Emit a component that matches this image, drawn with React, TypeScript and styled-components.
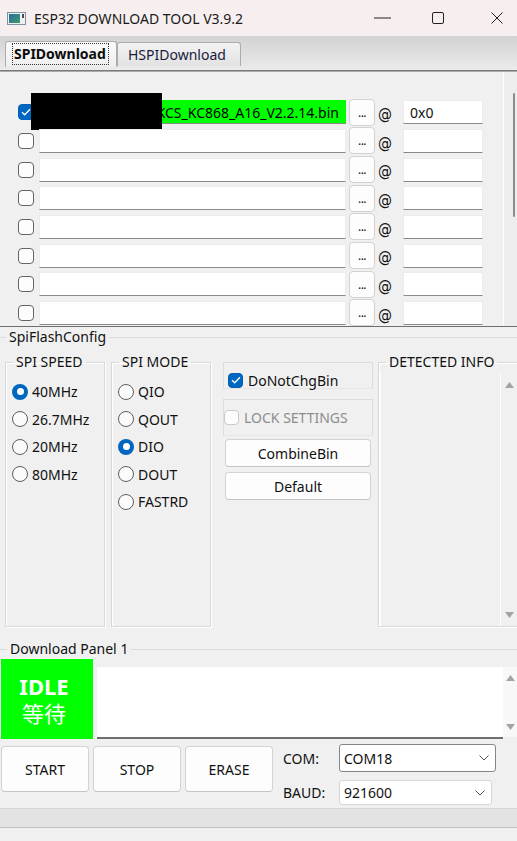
import React from "react";
import styled, { createGlobalStyle } from "styled-components";

const Global = createGlobalStyle`
  html, body { margin: 0; padding: 0; background: #f0f0f0; }
  body {
    font-family: "Noto Sans", "Liberation Sans", sans-serif;
    font-size: 14px;
    color: #111;
  }
  * { box-sizing: border-box; }
`;

const Window = styled.div`
  width: 517px;
  height: 841px;
  overflow: hidden;
  background: #f0f0f0;
  display: flex;
  flex-direction: column;
`;

/* ---------- title bar ---------- */
const TitleBar = styled.div`
  height: 36px;
  flex: none;
  display: flex;
  align-items: center;
  background: #f7efef;
  padding-left: 7px;
`;
const Title = styled.span`
  margin-left: 8px;
  font-size: 14px;
  color: #1a1a1a;
`;
const WinControls = styled.div`
  margin-left: auto;
  display: flex;
  align-items: center;
  padding-right: 14px;
`;
const WinGlyph = styled.span<{ $ml: number }>`
  margin-left: ${(p) => p.$ml}px;
  display: flex;
`;

/* ---------- tabs ---------- */
const TabStrip = styled.div`
  height: 36px;
  flex: none;
  display: flex;
  align-items: flex-start;
  padding: 5px 0 0 5px;
  background: linear-gradient(#d2d2d2, #ececec);
  border-bottom: 1px solid #aaaaaa;
  box-shadow: inset 0 -1px 0 #7a7a7a;
`;
const Tab = styled.div<{ $active?: boolean; $w: number }>`
  width: ${(p) => p.$w}px;
  height: ${(p) => (p.$active ? 26 : 24)}px;
  margin-top: ${(p) => (p.$active ? 0 : 1)}px;
  border: 1px solid #acacac;
  border-bottom: none;
  border-radius: 3px 3px 0 0;
  background: ${(p) =>
    p.$active ? "linear-gradient(#fbfbfb, #eeeeee)" : "linear-gradient(#f3f3f3, #e2e2e2)"};
  font-weight: ${(p) => (p.$active ? 700 : 400)};
  color: ${(p) => (p.$active ? "#0c0c0c" : "#1b1b3c")};
  display: flex;
  align-items: center;
  padding-left: ${(p) => (p.$active ? 6 : 10)}px;
  padding-bottom: 1px;
  font-size: 14px;
  white-space: nowrap;
`;
const FocusRing = styled.span`
  border: 1px dotted #333;
  height: 22px;
  display: flex;
  align-items: center;
  padding: 0 2px 1px 1px;
`;

/* ---------- file list ---------- */
const FilePanel = styled.div`
  height: 254px;
  flex: none;
  display: flex;
`;
const RowsArea = styled.div`
  flex: 1;
  padding: 26px 0 0 18px;
  overflow: hidden;
`;
const FileRow = styled.div`
  height: 28.67px;
  display: flex;
  align-items: center;
  position: relative;
`;
const CheckBox = styled.span<{ $checked?: boolean; $disabled?: boolean; $size?: number }>`
  width: ${(p) => p.$size ?? 16}px;
  height: ${(p) => p.$size ?? 16}px;
  flex: none;
  border-radius: 4px;
  border: ${(p) =>
    p.$checked ? "1px solid #005fb8" : p.$disabled ? "1.5px solid #cacaca" : "1.5px solid #646464"};
  background: ${(p) => (p.$checked ? "#0067c0" : "#fdfdfd")};
  display: flex;
  align-items: center;
  justify-content: center;
`;
const PathInput = styled.div<{ $filled?: boolean }>`
  width: 307px;
  height: 24px;
  margin-left: 5px;
  background: ${(p) => (p.$filled ? "#00ff00" : "#ffffff")};
  border: 1px solid ${(p) => (p.$filled ? "#00ff00" : "#ececec")};
  border-bottom: 1px solid #8a8a8a;
  display: flex;
  align-items: center;
  justify-content: flex-end;
  padding-right: 6px;
  font-size: 14px;
  color: #000;
  white-space: nowrap;
  overflow: hidden;
`;
const BrowseButton = styled.div`
  width: 26px;
  height: 27px;
  margin-left: 3px;
  background: #fdfdfd;
  border: 1px solid #d2d2d2;
  border-radius: 4px;
  display: flex;
  align-items: flex-end;
  justify-content: center;
  font-size: 12px;
  line-height: 1;
  padding-bottom: 6px;
  letter-spacing: -0.5px;
`;
const AtSign = styled.span`
  width: 14px;
  margin-left: 3px;
  font-size: 15.5px;
  line-height: 1;
  padding-top: 5px;
  font-family: "DejaVu Sans", "Noto Sans", sans-serif;
  transform: scaleX(0.9);
  transform-origin: left center;
`;
const AddrInput = styled.div`
  width: 80px;
  height: 24px;
  margin-left: 11px;
  background: #fff;
  border: 1px solid #ececec;
  border-bottom: 1px solid #8a8a8a;
  display: flex;
  align-items: center;
  padding-left: 6px;
  font-size: 14px;
`;
const Redaction = styled.div`
  position: absolute;
  left: 13px;
  top: -5px;
  width: 131px;
  height: 37px;
  background: #000;
`;
const ListScroll = styled.div`
  width: 14px;
  flex: none;
  border-left: 1px solid #ffffff;
  background: #eeeeee;
  padding: 21px 0 0 9px;
`;
const Thumb = styled.div`
  width: 2px;
  height: 124px;
  background: #8c8c8c;
  border-radius: 1px;
`;
const Splitter = styled.div`
  height: 1px;
  flex: none;
  background: #6e6e6e;
`;

/* ---------- group boxes ---------- */
const Section = styled.fieldset<{ $mt: number; $lm: number }>`
  margin: ${(p) => p.$mt}px 0 0 0;
  padding: 0;
  min-width: 0;
  flex: none;
  border: none;
  border-top: 1px solid #dcdcdc;
  & > legend {
    margin-left: ${(p) => p.$lm}px;
  }
`;
const Legend = styled.legend<{ $lh?: number }>`
  padding: 0 3px;
  line-height: ${(p) => p.$lh ?? 18}px;
  font-size: 14px;
  color: #111;
`;
const ConfigRow = styled.div`
  margin-top: 8px;
  height: 273px;
  display: flex;
`;
const GroupBox = styled.fieldset<{ $w?: number; $ml: number; $open?: boolean }>`
  margin: 0 0 0 ${(p) => p.$ml}px;
  padding: 0;
  min-width: 0;
  ${(p) => (p.$w ? `width: ${p.$w}px; flex: none;` : "flex: 1;")}
  border: 1px solid #d8d8d8;
  ${(p) => (p.$open ? "border-right: none;" : "")}
  box-shadow: 1px 1px 0 #ffffff, inset 1px 1px 0 #ffffff;
  display: flex;
  flex-direction: column;
  & > legend {
    margin-left: 7px;
  }
`;
const RadioList = styled.div`
  padding: 8px 0 0 6px;
  display: flex;
  flex-direction: column;
`;
const Option = styled.label`
  height: 27.5px;
  display: flex;
  align-items: center;
  font-size: 14px;
  color: #111;
`;
const Radio = styled.span<{ $checked?: boolean }>`
  width: 16px;
  height: 16px;
  flex: none;
  border-radius: 50%;
  margin-right: 4px;
  border: ${(p) => (p.$checked ? "none" : "1.5px solid #5e5e5e")};
  background: ${(p) => (p.$checked ? "#0067c0" : "#fbfbfb")};
  display: flex;
  align-items: center;
  justify-content: center;
  &::after {
    content: "";
    display: ${(p) => (p.$checked ? "block" : "none")};
    width: 7px;
    height: 7px;
    border-radius: 50%;
    background: #fff;
  }
`;
const MiddleCol = styled.div`
  width: 167px;
  flex: none;
  padding: 8px 0 0 12px;
  display: flex;
  flex-direction: column;
`;
const OptionBox = styled.div<{ $h: number; $mt: number; $pl: number; $pt: number }>`
  width: 150px;
  height: ${(p) => p.$h}px;
  margin-top: ${(p) => p.$mt}px;
  border: 1px solid #dcdcdc;
  border-bottom-color: #e6e6e6;
  display: flex;
  align-items: center;
  padding: ${(p) => p.$pt}px 0 0 ${(p) => p.$pl}px;
`;
const OptionText = styled.span<{ $disabled?: boolean }>`
  margin-left: 5px;
  font-size: 14px;
  color: ${(p) => (p.$disabled ? "#8d8d8d" : "#111")};
`;
const PushButton = styled.div<{ $w: number; $h: number; $mt: number; $ml?: number }>`
  width: ${(p) => p.$w}px;
  height: ${(p) => p.$h}px;
  margin-top: ${(p) => p.$mt}px;
  margin-left: ${(p) => p.$ml ?? 0}px;
  flex: none;
  background: #fdfdfd;
  border: 1px solid #d3d3d3;
  border-bottom-color: #c4c4c4;
  border-radius: 4px;
  display: flex;
  align-items: center;
  justify-content: center;
  font-size: 14px;
  color: #111;
`;
const InfoBody = styled.div`
  flex: 1;
  display: flex;
  padding: 3px 0 0 1px;
`;
const InfoArea = styled.div`
  width: 121px;
  flex: none;
  border-left: 1px solid #fff;
  border-right: 1px solid #fff;
  background: #f0f0f0;
`;
const ArrowCol = styled.div<{ $bg: string; $pt: number; $pb: number }>`
  flex: 1;
  background: ${(p) => p.$bg};
  display: flex;
  flex-direction: column;
  justify-content: space-between;
  align-items: center;
  padding: ${(p) => p.$pt}px 0 ${(p) => p.$pb}px 0;
`;

/* ---------- download panel ---------- */
const DownloadBody = styled.div`
  display: flex;
  align-items: flex-start;
  margin-top: 1px;
`;
const StatusBox = styled.div`
  width: 92px;
  height: 80px;
  margin-left: 1px;
  flex: none;
  background: #00ff00;
  color: #fff;
  display: flex;
  flex-direction: column;
  align-items: center;
  justify-content: center;
  padding-right: 6px;
  font-size: 22px;
`;
const IdleText = styled.span`
  display: block;
  height: 26px;
  line-height: 26px;
  font-weight: 700;
  font-family: "Noto Sans", sans-serif;
`;
const CjkText = styled.span`
  display: block;
  height: 26px;
  line-height: 26px;
  font-family: "Noto Sans CJK SC", "Noto Sans", sans-serif;
  font-weight: 400;
`;
const LogBox = styled.div`
  flex: 1;
  height: 72px;
  margin: 8px 0 0 4px;
  display: flex;
`;
const LogText = styled.div`
  flex: 1;
  background: #fff;
  border-bottom: 2px solid #6f6f6f;
`;
const LogScroll = styled.div`
  width: 14px;
  flex: none;
  height: 70px;
  background: #f8f8f8;
  display: flex;
  flex-direction: column;
  justify-content: space-between;
  align-items: center;
  padding: 8px 0 7px 0;
`;

/* ---------- controls ---------- */
const ControlsRow = styled.div`
  margin-top: 5px;
  height: 62px;
  flex: none;
  display: flex;
  align-items: flex-start;
`;
const PortGrid = styled.div`
  margin-left: 10px;
  display: grid;
  grid-template-columns: 56px auto;
  grid-template-rows: 28px 25px;
  row-gap: 8px;
  align-items: center;
`;
const PortLabel = styled.span`
  font-size: 14px;
  color: #111;
`;
const Select = styled.div<{ $w: number; $focus?: boolean }>`
  width: ${(p) => p.$w}px;
  height: 100%;
  background: #fff;
  border: 1px solid ${(p) => (p.$focus ? "#858585" : "#d6d6d6")};
  border-radius: 3px;
  display: flex;
  align-items: center;
  justify-content: space-between;
  padding: 0 6px 0 4px;
  font-size: 14px;
  color: #111;
`;
const StatusBar = styled.div`
  margin-top: 2px;
  height: 20px;
  flex: none;
  background: #e3e3e3;
  border-top: 1px solid #d6d6d6;
  border-bottom: 1px solid #c4c4c4;
`;

const Check = () => (
  <svg width="10" height="8" viewBox="0 0 10 8">
    <path d="M1 4.2 L3.7 6.8 L9 1.2" fill="none" stroke="#fff" strokeWidth="1.3" />
  </svg>
);
const UpArrow = () => (
  <svg width="9" height="6" viewBox="0 0 9 6">
    <polygon points="0,6 4.5,0 9,6" fill="#a3a3a3" />
  </svg>
);
const DownArrow = () => (
  <svg width="9" height="6" viewBox="0 0 9 6">
    <polygon points="0,0 4.5,6 9,0" fill="#a3a3a3" />
  </svg>
);
const Chevron = () => (
  <svg width="10" height="6" viewBox="0 0 10 6">
    <path d="M0.5 0.5 L5 5 L9.5 0.5" fill="none" stroke="#555" strokeWidth="1" />
  </svg>
);

const AppIcon = () => (
  <svg width="19" height="13" viewBox="0 0 19 13">
    <defs>
      <linearGradient id="appg" x1="0" y1="0" x2="1" y2="1">
        <stop offset="0" stopColor="#2c6aa0" />
        <stop offset="1" stopColor="#3c9e6c" />
      </linearGradient>
    </defs>
    <rect x="0.5" y="0.5" width="18" height="12" fill="#eef1f4" stroke="#8390a0" />
    <rect x="2" y="2" width="11" height="9" fill="url(#appg)" />
    <rect x="15" y="2" width="2" height="4" fill="#4a4a4a" />
  </svg>
);

const App: React.FC = () => {
  const rows = Array.from({ length: 8 }, (_, i) => i);
  return (
    <Window>
      <Global />
      <TitleBar>
        <AppIcon />
        <Title>ESP32 DOWNLOAD TOOL V3.9.2</Title>
        <WinControls>
          <WinGlyph $ml={0}>
            <svg width="17" height="2" viewBox="0 0 17 2">
              <rect x="0" y="0.5" width="17" height="1" fill="#222" />
            </svg>
          </WinGlyph>
          <WinGlyph $ml={41}>
            <svg width="12" height="12" viewBox="0 0 12 12">
              <rect x="0.5" y="0.5" width="11" height="11" rx="1.5" fill="none" stroke="#222" />
            </svg>
          </WinGlyph>
          <WinGlyph $ml={47}>
            <svg width="12" height="12" viewBox="0 0 12 12">
              <path d="M0.5 0.5 L11.5 11.5 M11.5 0.5 L0.5 11.5" stroke="#222" strokeWidth="1" />
            </svg>
          </WinGlyph>
        </WinControls>
      </TitleBar>

      <TabStrip>
        <Tab $active $w={112}>
          <FocusRing>SPIDownload</FocusRing>
        </Tab>
        <Tab $w={124}>HSPIDownload</Tab>
      </TabStrip>

      <FilePanel>
        <RowsArea>
          {rows.map((i) => (
            <FileRow key={i}>
              <CheckBox $checked={i === 0}>{i === 0 && <Check />}</CheckBox>
              <PathInput $filled={i === 0}>{i === 0 ? "KCS_KC868_A16_V2.2.14.bin" : ""}</PathInput>
              <BrowseButton>...</BrowseButton>
              <AtSign>@</AtSign>
              <AddrInput>{i === 0 ? "0x0" : ""}</AddrInput>
              {i === 0 && <Redaction />}
            </FileRow>
          ))}
        </RowsArea>
        <ListScroll>
          <Thumb />
        </ListScroll>
      </FilePanel>
      <Splitter />

      <Section $mt={1} $lm={6}>
        <Legend>SpiFlashConfig</Legend>
        <ConfigRow>
          <GroupBox $w={100} $ml={5}>
            <Legend $lh={16}>SPI SPEED</Legend>
            <RadioList>
              {["40MHz", "26.7MHz", "20MHz", "80MHz"].map((s, i) => (
                <Option key={s}>
                  <Radio $checked={i === 0} />
                  {s}
                </Option>
              ))}
            </RadioList>
          </GroupBox>
          <GroupBox $w={100} $ml={6}>
            <Legend $lh={16}>SPI MODE</Legend>
            <RadioList>
              {["QIO", "QOUT", "DIO", "DOUT", "FASTRD"].map((s) => (
                <Option key={s}>
                  <Radio $checked={s === "DIO"} />
                  {s}
                </Option>
              ))}
            </RadioList>
          </GroupBox>
          <MiddleCol>
            <OptionBox $h={27} $mt={0} $pl={4} $pt={9}>
              <CheckBox $checked $size={15}>
                <Check />
              </CheckBox>
              <OptionText>DoNotChgBin</OptionText>
            </OptionBox>
            <OptionBox $h={37} $mt={10} $pl={0} $pt={0}>
              <CheckBox $disabled $size={15} />
              <OptionText $disabled>LOCK SETTINGS</OptionText>
            </OptionBox>
            <PushButton $w={146} $h={28} $mt={3} $ml={2}>
              CombineBin
            </PushButton>
            <PushButton $w={146} $h={28} $mt={5} $ml={2}>
              Default
            </PushButton>
          </MiddleCol>
          <GroupBox $ml={0} $open>
            <Legend $lh={16}>DETECTED INFO</Legend>
            <InfoBody>
              <InfoArea />
              <ArrowCol $bg="#f0f0f0" $pt={9} $pb={8}>
                <UpArrow />
                <DownArrow />
              </ArrowCol>
            </InfoBody>
          </GroupBox>
        </ConfigRow>
      </Section>

      <Section $mt={13} $lm={7}>
        <Legend>Download Panel 1</Legend>
        <DownloadBody>
          <StatusBox>
            <IdleText>IDLE</IdleText>
            <CjkText>等待</CjkText>
          </StatusBox>
          <LogBox>
            <LogText />
            <LogScroll>
              <UpArrow />
              <DownArrow />
            </LogScroll>
          </LogBox>
        </DownloadBody>
      </Section>

      <ControlsRow>
        <PushButton $w={88} $h={46} $mt={2} $ml={1}>
          START
        </PushButton>
        <PushButton $w={88} $h={46} $mt={2} $ml={4}>
          STOP
        </PushButton>
        <PushButton $w={88} $h={46} $mt={2} $ml={4}>
          ERASE
        </PushButton>
        <PortGrid>
          <PortLabel>COM:</PortLabel>
          <Select $w={157} $focus>
            COM18
            <Chevron />
          </Select>
          <PortLabel>BAUD:</PortLabel>
          <Select $w={153}>
            921600
            <Chevron />
          </Select>
        </PortGrid>
      </ControlsRow>
      <StatusBar />
    </Window>
  );
};

export default App;
